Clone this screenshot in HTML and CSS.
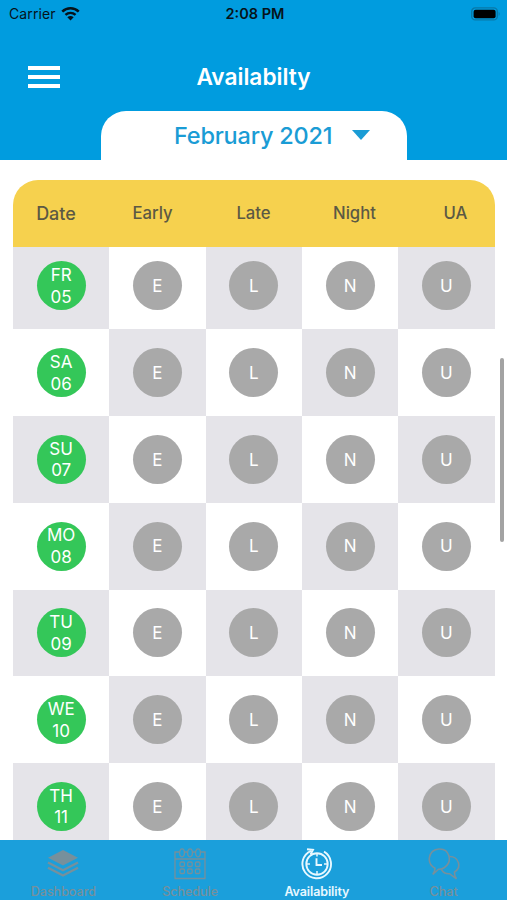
FILE: index.html
```html
<!DOCTYPE html>
<html lang="en">
<head>
  <meta charset="utf-8">
  <title>Availability</title>
  <link rel="stylesheet" href="styles.css">
</head>
<body>
  <div class="app">
    <header class="header">
      <div class="status-bar">
        <div class="carrier">
          <span>Carrier</span>
          <svg class="wifi" viewBox="0 0 18 14">
            <path d="M1.2 5.3C5.6 1 12.4 1 16.8 5.3" fill="none" stroke="#06131a" stroke-width="2.4"/>
            <path d="M4.2 8.4C7 5.8 11 5.8 13.8 8.4" fill="none" stroke="#06131a" stroke-width="2.3"/>
            <path d="M6 10.6C7.8 9 10.2 9 12 10.6L9 13.7Z" fill="#06131a"/>
          </svg>
        </div>
        <div class="time">2:08 PM</div>
        <div class="battery">
          <svg viewBox="0 0 30 14">
            <rect x=".7" y=".9" width="25.6" height="12" rx="3.5" fill="none" stroke="#0878a8" stroke-width="1.4"/>
            <rect x="2.6" y="2.7" width="22" height="8.6" rx="2" fill="#000"/>
            <path d="M27.7 4.8Q29.6 6.9 27.7 9Z" fill="#0878a8"/>
          </svg>
        </div>
      </div>
      <div class="title-bar">
        <div class="menu-button">
          <span></span>
          <span></span>
          <span></span>
        </div>
        <h1 class="title">Availabilty</h1>
      </div>
      <div class="month-picker">
        <span class="month">February 2021</span>
        <span class="arrow"></span>
      </div>
    </header>

    <main class="table">
      <div class="table-head">
        <div class="date-head">Date</div>
        <div>Early</div>
        <div>Late</div>
        <div>Night</div>
        <div>UA</div>
      </div>
      <div class="table-body">
        <div class="row">
          <div class="cell"><div class="circle date">FR<br>05</div></div>
          <div class="cell"><div class="circle">E</div></div>
          <div class="cell"><div class="circle">L</div></div>
          <div class="cell"><div class="circle">N</div></div>
          <div class="cell"><div class="circle">U</div></div>
        </div>
        <div class="row">
          <div class="cell"><div class="circle date">SA<br>06</div></div>
          <div class="cell"><div class="circle">E</div></div>
          <div class="cell"><div class="circle">L</div></div>
          <div class="cell"><div class="circle">N</div></div>
          <div class="cell"><div class="circle">U</div></div>
        </div>
        <div class="row">
          <div class="cell"><div class="circle date">SU<br>07</div></div>
          <div class="cell"><div class="circle">E</div></div>
          <div class="cell"><div class="circle">L</div></div>
          <div class="cell"><div class="circle">N</div></div>
          <div class="cell"><div class="circle">U</div></div>
        </div>
        <div class="row">
          <div class="cell"><div class="circle date">MO<br>08</div></div>
          <div class="cell"><div class="circle">E</div></div>
          <div class="cell"><div class="circle">L</div></div>
          <div class="cell"><div class="circle">N</div></div>
          <div class="cell"><div class="circle">U</div></div>
        </div>
        <div class="row">
          <div class="cell"><div class="circle date">TU<br>09</div></div>
          <div class="cell"><div class="circle">E</div></div>
          <div class="cell"><div class="circle">L</div></div>
          <div class="cell"><div class="circle">N</div></div>
          <div class="cell"><div class="circle">U</div></div>
        </div>
        <div class="row">
          <div class="cell"><div class="circle date">WE<br>10</div></div>
          <div class="cell"><div class="circle">E</div></div>
          <div class="cell"><div class="circle">L</div></div>
          <div class="cell"><div class="circle">N</div></div>
          <div class="cell"><div class="circle">U</div></div>
        </div>
        <div class="row">
          <div class="cell"><div class="circle date">TH<br>11</div></div>
          <div class="cell"><div class="circle">E</div></div>
          <div class="cell"><div class="circle">L</div></div>
          <div class="cell"><div class="circle">N</div></div>
          <div class="cell"><div class="circle">U</div></div>
        </div>
      </div>
    </main>
    <div class="scrollbar"></div>

    <nav class="tab-bar">
      <div class="tab">
        <svg viewBox="0 0 32 32">
          <path d="M16 2L31 9.8 16 17.5 1 9.8Z" fill="currentColor"/>
          <path d="M1 14.5L16 22.2 31 14.5M1 19.8L16 27.5 31 19.8" fill="none" stroke="currentColor" stroke-width="2.4"/>
        </svg>
        <span>Dashboard</span>
      </div>
      <div class="tab">
        <svg viewBox="0 0 32 32" fill="none" stroke="currentColor" stroke-width="1.3">
          <path d="M5 4H1V30.5H31V4H27M1 11H31"/>
          <ellipse cx="8" cy="4.8" rx="2.4" ry="4"/>
          <ellipse cx="16" cy="4.8" rx="2.4" ry="4"/>
          <ellipse cx="24" cy="4.8" rx="2.4" ry="4"/>
          <path d="M11 4H13M19 4H21"/>
          <rect x="6" y="14" width="4.5" height="4.5" rx="1.2"/>
          <rect x="13.7" y="14" width="4.5" height="4.5" rx="1.2"/>
          <rect x="21.4" y="14" width="4.5" height="4.5" rx="1.2"/>
          <rect x="6" y="21" width="4.5" height="4.5" rx="1.2"/>
          <rect x="13.7" y="21" width="4.5" height="4.5" rx="1.2"/>
          <rect x="21.4" y="21" width="4.5" height="4.5" rx="1.2"/>
        </svg>
        <span>Schedule</span>
      </div>
      <div class="tab active">
        <svg viewBox="0 0 32 32" fill="none" stroke="currentColor" stroke-width="1.9">
          <path d="M10 2.8A14.3 14.3 0 1 0 23 3.6"/>
          <path d="M6 1.2L12 1.8 9.5 6.5"/>
          <circle cx="16" cy="16" r="10.7"/>
          <path d="M16 5V8.5M16 23V26.5M5.3 16H9M23 16H26.7" stroke-width="1.5"/>
          <path d="M15.5 10.3V17H21"/>
        </svg>
        <span>Availability</span>
      </div>
      <div class="tab">
        <svg viewBox="0 0 32 32" fill="none" stroke="currentColor" stroke-width="1.6">
          <path d="M7 20.2C-2 15.5 0 2 11 1 21.5 .5 25 13.5 16.5 19.5 14.5 21 12.5 21.3 10.5 21.2L4.8 26.5C6.5 24 7 22.5 7 20.2Z"/>
          <path d="M21.5 8.5C31 8.5 34 19.5 26.5 24 26.3 26.5 26.8 28.5 28.5 30.8L21.5 25.7C17.5 26 15 24.3 13.3 21.3"/>
        </svg>
        <span>Chat</span>
      </div>
    </nav>
  </div>
</body>
</html>
```

FILE: styles.css
```css
* {
  box-sizing: border-box;
}

body {
  margin: 0;
  background-color: #fff;
  font-family: Inter, "Liberation Sans", sans-serif;
}

.app {
  position: relative;
  display: flex;
  flex-direction: column;
  height: 900px;
  overflow: hidden;
}

.header {
  display: flex;
  flex-direction: column;
  height: 159.5px;
  background-color: #009cdf;
}

.status-bar {
  display: grid;
  grid-template-columns: 1fr auto 1fr;
  align-items: center;
  height: 27px;
  padding: 0 6px 0 9px;
  font-size: 14px;
  color: #06131a;
}

.carrier {
  display: flex;
  align-items: center;
  gap: 5px;
  letter-spacing: 0.1px;
}

.wifi {
  width: 19px;
  height: 15px;
}

.time {
  font-size: 14.5px;
  font-weight: 600;
}

.battery {
  display: flex;
  justify-content: flex-end;
}

.battery svg {
  width: 30px;
  height: 14px;
}

.title-bar {
  display: grid;
  grid-template-columns: 60px 1fr 60px;
  align-items: center;
  height: 83.5px;
  padding-top: 16px;
}

.menu-button {
  display: flex;
  flex-direction: column;
  gap: 5px;
  width: 32.5px;
  margin-left: 27.5px;
}

.menu-button span {
  height: 4px;
  background-color: #fff;
}

.title {
  margin: 0;
  font-size: 22.7px;
  font-weight: 600;
  text-align: center;
  color: #fff;
}

.month-picker {
  display: flex;
  align-items: center;
  gap: 20px;
  flex: 1;
  width: 306px;
  margin-left: 101px;
  padding-left: 73px;
  border-radius: 25px 25px 0 0;
  background-color: #fff;
}

.month {
  font-size: 23.5px;
  font-weight: 500;
  letter-spacing: -0.2px;
  color: #1a9cd5;
}

.arrow {
  border: 9px solid transparent;
  border-top: 10px solid #1a9cd5;
  border-bottom: 0;
}

.table {
  display: flex;
  flex-direction: column;
  flex: 1;
  min-height: 0;
  width: 481.5px;
  margin: 20px 0 0 13px;
}

.table-head {
  display: grid;
  grid-template-columns: repeat(5, 101px);
  align-items: center;
  flex-shrink: 0;
  height: 67px;
  border-radius: 25px 25px 0 0;
  background-color: #f6d14e;
  font-size: 16.7px;
  font-weight: 500;
  color: #5c5944;
}

.table-head div {
  width: 77px;
  text-align: center;
}

.table-head .date-head {
  width: 86px;
  font-size: 18px;
}

.table-body {
  flex: 1;
  min-height: 0;
  overflow: hidden;
}

.row {
  display: grid;
  grid-template-columns: repeat(5, 1fr);
  height: 86.75px;
}

/* the list is scrolled a few pixels under the head */
.row:first-child {
  margin-top: -4px;
}

.cell {
  display: flex;
  justify-content: center;
  align-items: center;
}

.row:nth-child(odd) .cell:nth-child(odd),
.row:nth-child(even) .cell:nth-child(even) {
  background-color: #e5e4e9;
}

.circle {
  display: flex;
  justify-content: center;
  align-items: center;
  width: 49px;
  height: 49px;
  padding-top: 2px;
  border-radius: 50%;
  background-color: #a9a9a9;
  font-size: 17px;
  line-height: 21.7px;
  text-align: center;
  color: #fff;
}

.date {
  background-color: #34c759;
}

.scrollbar {
  position: absolute;
  top: 358px;
  right: 3.5px;
  width: 4px;
  height: 184px;
  border-radius: 2px;
  background-color: #a3a3a3;
}

.tab-bar {
  display: grid;
  grid-template-columns: repeat(4, 1fr);
  flex-shrink: 0;
  height: 60px;
  background-color: #1b9fdb;
}

.tab {
  display: flex;
  flex-direction: column;
  align-items: center;
  gap: 4px;
  padding-top: 7.5px;
  font-size: 12.5px;
  font-weight: 500;
  color: #76909c;
}

.tab svg {
  width: 32px;
  height: 32px;
}

.tab.active {
  font-weight: 600;
  letter-spacing: -0.1px;
  color: #e8f8ff;
}
```
